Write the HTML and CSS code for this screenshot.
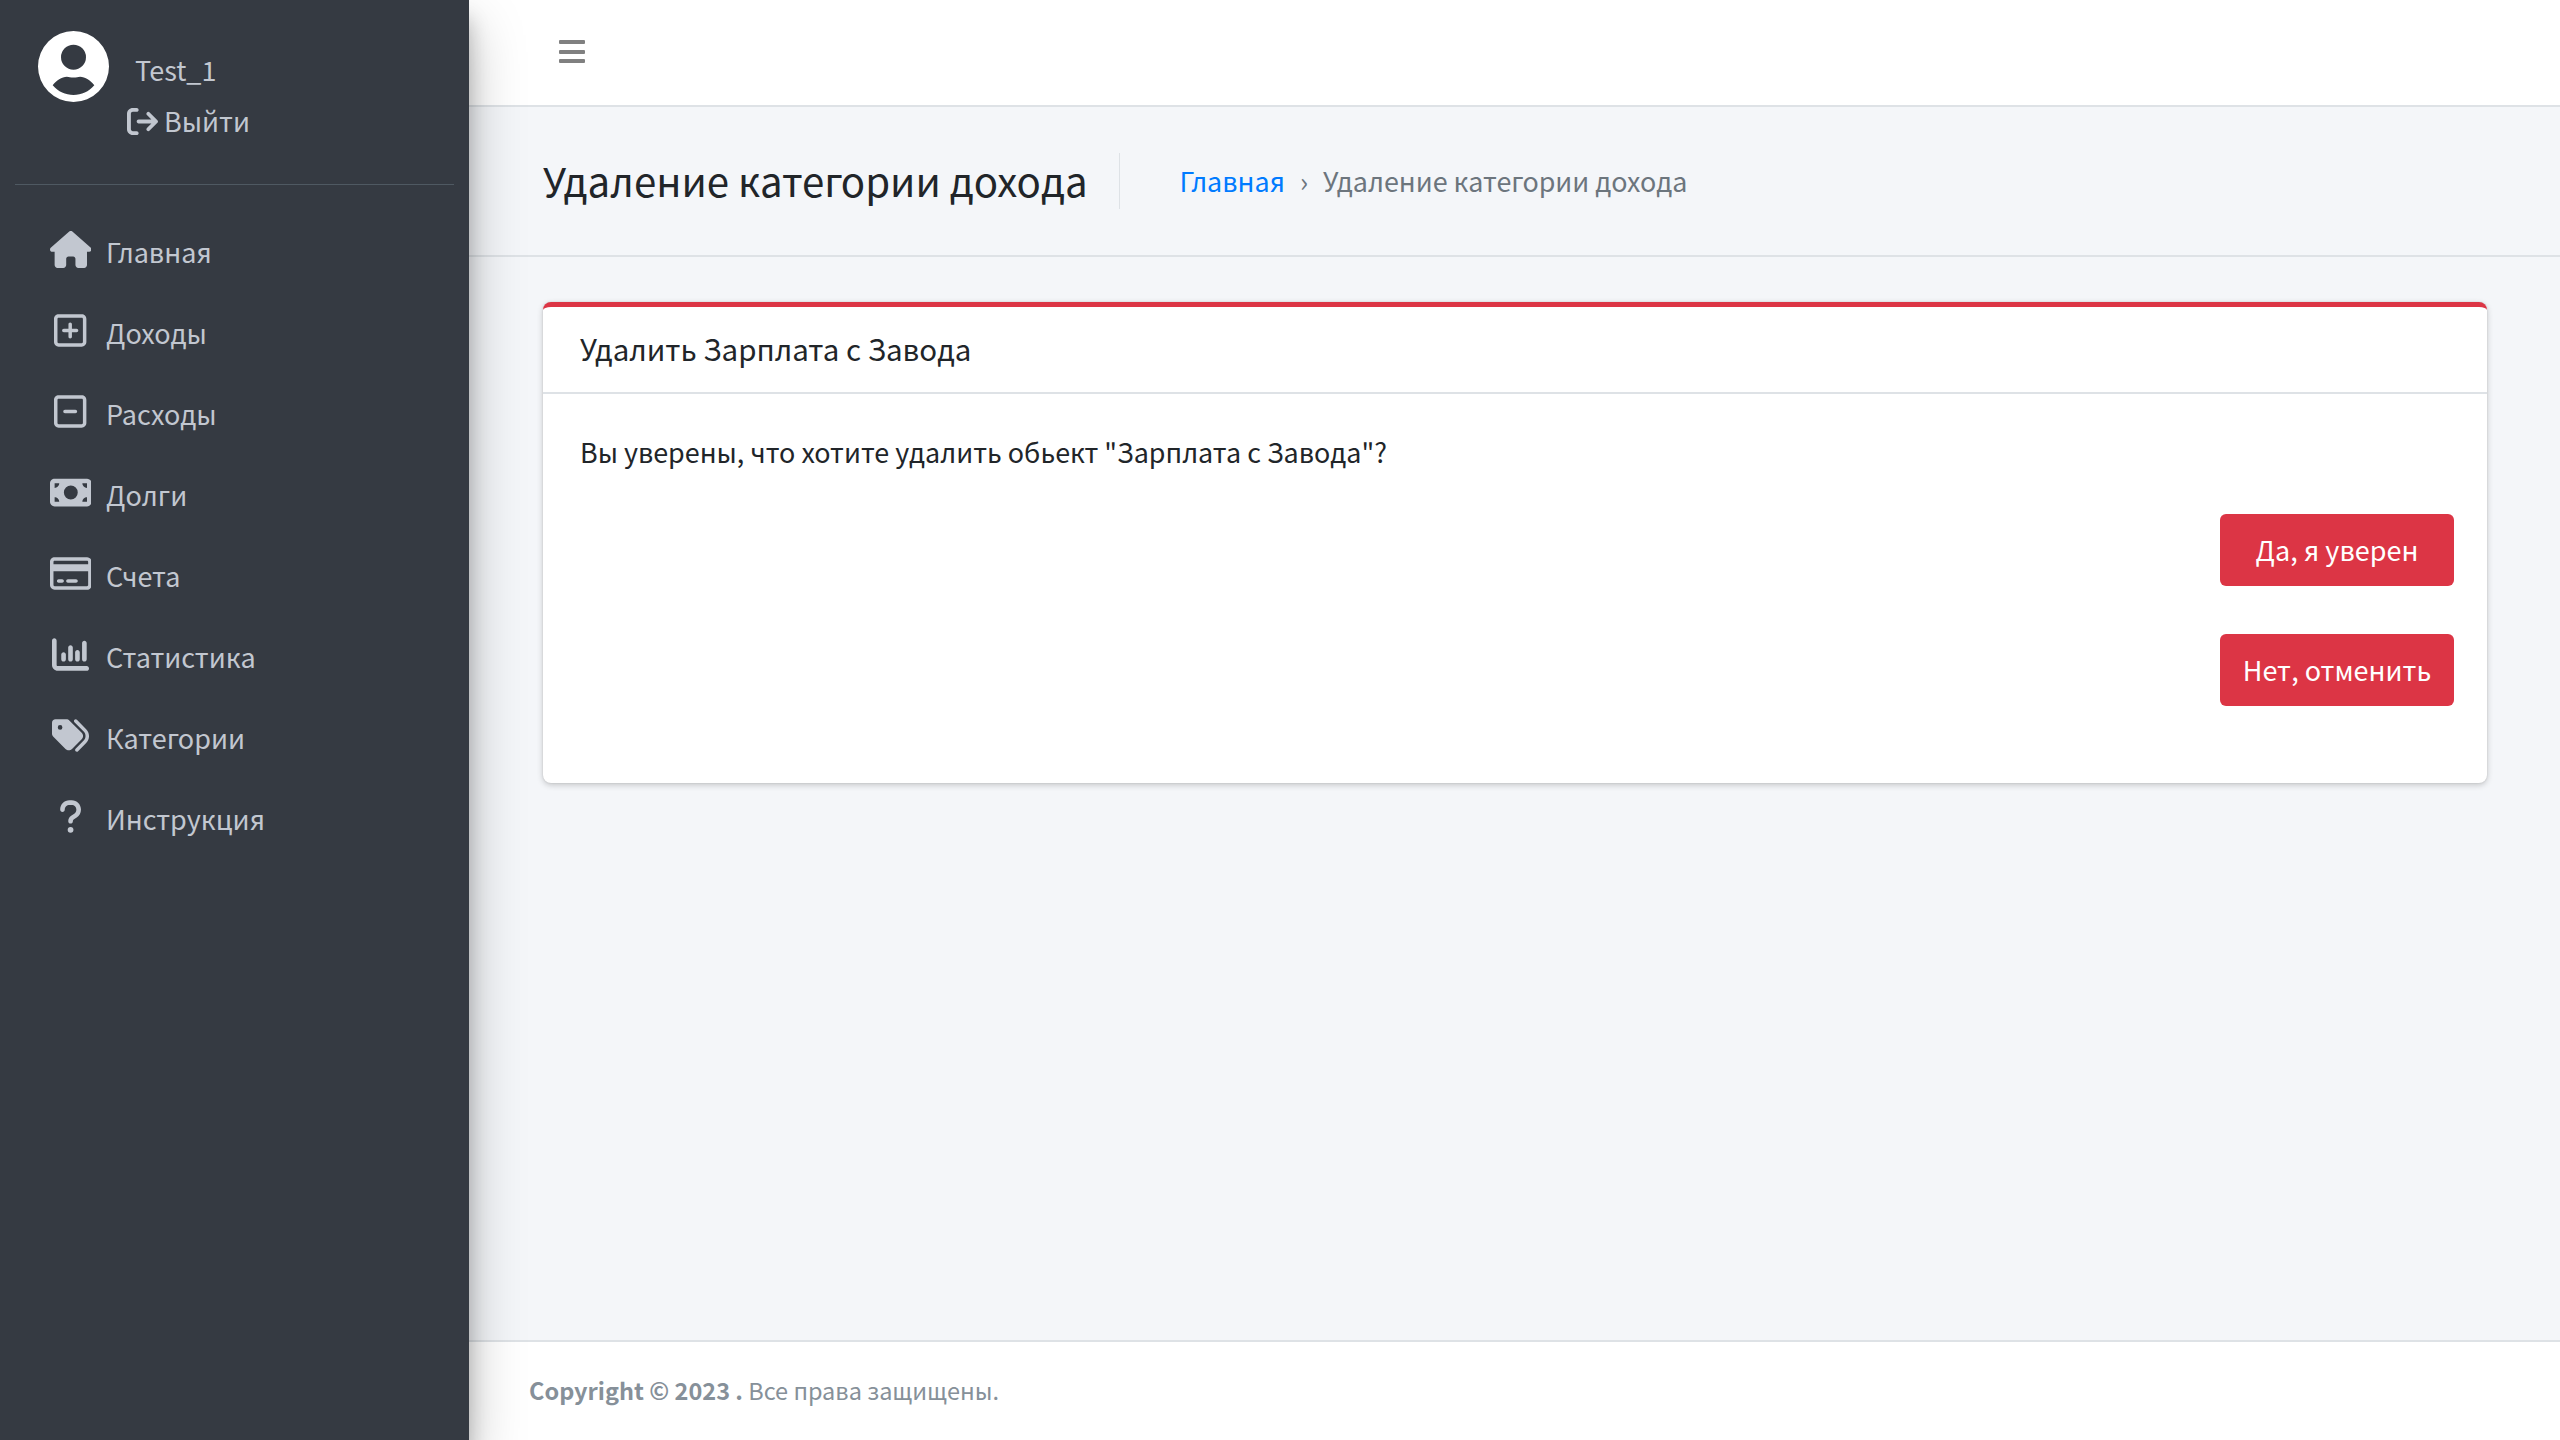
FILE: index.html
```html
<!DOCTYPE html>
<html lang="ru">
<head>
    <meta charset="UTF-8">
    <meta name="viewport" content="width=device-width, initial-scale=1.0">
    <title>Удаление категории дохода</title>
    <link rel="stylesheet" href="styles.css">
</head>
<body>
    <aside class="sidebar">
        <div class="user-panel">
            <svg class="avatar" viewBox="0 0 70 70"><path fill="#fff" fill-rule="evenodd" d="M35 0a35 35 0 1 1 0 70a35 35 0 1 1 0-70zM35 13.500a12.300 12.300 0 1 0 0 24.600a12.300 12.300 0 1 0 0-24.600zM14.500 53.500c5.500 6.500 12.500 9.500 20.500 9.500s15-3 20.500-9.500c-3.500-5-9-8.500-14-8.500c-2 0-3.500 .8-6.500 .8s-4.500-.8-6.500-.8c-5 0-10.500 3.500-14 8.500z"/></svg>
            <div class="user-info">
                <div class="user-name">Test_1</div>
                <a class="user-logout" href="#">
                    <svg class="logout-icon" viewBox="0 0 512 512"><path d="M502.6 278.6c12.5-12.5 12.5-32.8 0-45.3l-128-128c-12.5-12.5-32.8-12.5-45.3 0s-12.5 32.8 0 45.3L402.700 224 192 224c-17.700 0-32 14.300-32 32s14.300 32 32 32l210.700 0-73.400 73.400c-12.500 12.500-12.500 32.800 0 45.300s32.800 12.500 45.300 0l128-128zM160 96c17.700 0 32-14.300 32-32s-14.300-32-32-32L96 32C43 32 0 75 0 128L0 384c0 53 43 96 96 96l64 0c17.700 0 32-14.300 32-32s-14.300-32-32-32l-64 0c-17.700 0-32-14.300-32-32l0-256c0-17.700 14.300-32 32-32l64 0z"/></svg>
                    Выйти
                </a>
            </div>
        </div>

        <!-- Меню -->
        <nav class="menu">
            <a class="menu-item" href="#">
                <span class="menu-icon"><svg viewBox="0 0 576 512"><path d="M575.800 255.500c0 18-15 32.100-32 32.100h-32l.7 160.200c0 2.700-.2 5.400-.5 8.100V472c0 22.100-17.900 40-40 40H456c-1.100 0-2.200 0-3.300-.1c-1.400 .1-2.800 .1-4.200 .1H416 392c-22.100 0-40-17.900-40-40V448 384c0-17.700-14.300-32-32-32H256c-17.700 0-32 14.300-32 32v64 24c0 22.100-17.900 40-40 40H160 128.100c-1.500 0-3-.1-4.500-.2c-1.200 .1-2.400 .2-3.600 .2H104c-22.100 0-40-17.900-40-40V360c0-.9 0-1.900 .1-2.800V287.600H32c-18 0-32-14-32-32.100c0-9 3-17 10-24L266.400 8c7-7 15-8 22-8s15 2 21 7L564.800 231.500c8 7 12 15 11 24z"/></svg></span>
                Главная
            </a>
            <a class="menu-item" href="#">
                <span class="menu-icon"><svg viewBox="0 0 448 512"><path d="M64 80c-8.800 0-16 7.200-16 16V416c0 8.800 7.200 16 16 16H384c8.800 0 16-7.200 16-16V96c0-8.800-7.200-16-16-16H64zM0 96C0 60.700 28.700 32 64 32H384c35.300 0 64 28.700 64 64V416c0 35.300-28.700 64-64 64H64c-35.300 0-64-28.700-64-64V96zM200 344V280H136c-13.300 0-24-10.700-24-24s10.700-24 24-24h64V168c0-13.300 10.700-24 24-24s24 10.700 24 24v64h64c13.300 0 24 10.700 24 24s-10.700 24-24 24H248v64c0 13.300-10.700 24-24 24s-24-10.700-24-24z"/></svg></span>
                Доходы
            </a>
            <a class="menu-item" href="#">
                <span class="menu-icon"><svg viewBox="0 0 448 512"><path d="M64 80c-8.800 0-16 7.200-16 16V416c0 8.800 7.200 16 16 16H384c8.800 0 16-7.200 16-16V96c0-8.800-7.200-16-16-16H64zM0 96C0 60.700 28.700 32 64 32H384c35.300 0 64 28.700 64 64V416c0 35.300-28.700 64-64 64H64c-35.300 0-64-28.700-64-64V96zM152 232H296c13.300 0 24 10.700 24 24s-10.700 24-24 24H152c-13.300 0-24-10.700-24-24s10.700-24 24-24z"/></svg></span>
                Расходы
            </a>
            <a class="menu-item" href="#">
                <span class="menu-icon"><svg viewBox="0 0 576 512"><path d="M64 64C28.700 64 0 92.700 0 128V384c0 35.300 28.700 64 64 64H512c35.300 0 64-28.700 64-64V128c0-35.300-28.700-64-64-64H64zm64 320H64V320c35.300 0 64 28.700 64 64zM64 192V128h64c0 35.300-28.700 64-64 64zM448 384c0-35.300 28.700-64 64-64v64H448zm64-192c-35.300 0-64-28.700-64-64h64v64zM288 160a96 96 0 1 1 0 192 96 96 0 1 1 0-192z"/></svg></span>
                Долги
            </a>
            <a class="menu-item" href="#">
                <span class="menu-icon"><svg viewBox="0 0 576 512"><path d="M512 80c8.800 0 16 7.200 16 16v32H48V96c0-8.800 7.200-16 16-16H512zm16 144V416c0 8.800-7.200 16-16 16H64c-8.800 0-16-7.200-16-16V224H528zM64 32C28.700 32 0 60.700 0 96V416c0 35.300 28.700 64 64 64H512c35.300 0 64-28.700 64-64V96c0-35.300-28.700-64-64-64H64zm56 304c-13.300 0-24 10.700-24 24s10.700 24 24 24h48c13.300 0 24-10.700 24-24s-10.700-24-24-24H120zm128 0c-13.300 0-24 10.700-24 24s10.700 24 24 24H360c13.300 0 24-10.700 24-24s-10.700-24-24-24H248z"/></svg></span>
                Счета
            </a>
            <a class="menu-item" href="#">
                <span class="menu-icon"><svg viewBox="0 0 512 512"><path d="M32 32c17.700 0 32 14.300 32 32V400c0 8.800 7.200 16 16 16H480c17.700 0 32 14.300 32 32s-14.300 32-32 32H80c-44.200 0-80-35.800-80-80V64C0 46.300 14.300 32 32 32zM160 224c17.700 0 32 14.300 32 32v64c0 17.700-14.300 32-32 32s-32-14.300-32-32V256c0-17.700 14.300-32 32-32zm128-64V320c0 17.700-14.300 32-32 32s-32-14.300-32-32V160c0-17.700 14.300-32 32-32s32 14.300 32 32zm64 32c17.700 0 32 14.300 32 32v96c0 17.700-14.300 32-32 32s-32-14.300-32-32V224c0-17.700 14.300-32 32-32zM480 96V320c0 17.700-14.300 32-32 32s-32-14.300-32-32V96c0-17.700 14.300-32 32-32s32 14.300 32 32z"/></svg></span>
                Статистика
            </a>
            <a class="menu-item" href="#">
                <span class="menu-icon"><svg viewBox="0 0 512 512"><path d="M345 39.100L472.800 168.400c52.400 53 52.400 138.200 0 191.200L360.800 472.900c-9.300 9.400-24.500 9.500-33.900 .2s-9.500-24.500-.2-33.900L438.600 325.900c33.900-34.300 33.900-89.400 0-123.700L310.900 72.900c-9.300-9.400-9.200-24.600 .2-33.900s24.600-9.200 33.900 .2zM0 229.500V80C0 53.500 21.500 32 48 32H197.500c17 0 33.300 6.700 45.300 18.700l168 168c25 25 25 65.500 0 90.500L277.300 442.700c-25 25-65.500 25-90.500 0l-168-168C6.700 262.700 0 246.500 0 229.500zM144 144a32 32 0 1 0 -64 0 32 32 0 1 0 64 0z"/></svg></span>
                Категории
            </a>
            <a class="menu-item" href="#">
                <span class="menu-icon"><svg viewBox="0 0 320 512"><path d="M80 160c0-35.300 28.700-64 64-64h32c35.300 0 64 28.700 64 64v3.600c0 21.800-11.100 42.100-29.400 53.800l-42.200 27.100c-25.200 16.200-40.400 44.100-40.400 74V320c0 17.700 14.300 32 32 32s32-14.300 32-32v-1.400c0-8.200 4.200-15.800 11-20.200l42.200-27.100c36.600-23.600 58.800-64.100 58.800-107.700V160c0-70.700-57.300-128-128-128H144C73.300 32 16 89.300 16 160c0 17.700 14.300 32 32 32s32-14.300 32-32zm80 320a40 40 0 1 0 0-80 40 40 0 1 0 0 80z"/></svg></span>
                Инструкция
            </a>
        </nav>
    </aside>

    <div class="wrapper">
        <header class="navbar">
            <a class="menu-toggle" href="#">
                <span></span>
                <span></span>
                <span></span>
            </a>
        </header>

        <section class="content-header">
            <h1>Удаление категории дохода</h1>
            <ol class="breadcrumb">
                <li><a href="#">Главная</a></li>
                <li class="breadcrumb-sep">›</li>
                <li class="breadcrumb-active">Удаление категории дохода</li>
            </ol>
        </section>

        <main class="content">
            <div class="card">
                <div class="card-header">Удалить Зарплата с Завода</div>
                <div class="card-body">
                    <p>Вы уверены, что хотите удалить обьект "Зарплата с Завода"?</p>
                    <div class="actions">
                        <button class="btn">Да, я уверен</button>
                        <button class="btn">Нет, отменить</button>
                    </div>
                </div>
            </div>
        </main>

        <footer class="footer">
            <strong>Copyright © 2023 .</strong>&nbsp;Все права защищены.
        </footer>
    </div>
</body>
</html>
```

FILE: styles.css
```css
* {
    box-sizing: border-box;
}
body {
    font-family: "Noto Sans CJK SC", "Noto Sans", sans-serif;
    font-size: 27px;
    display: flex;
    height: 100vh;
    margin: 0;
    padding: 0;
    overflow: hidden;
    color: #212529;
    background-color: #f4f6f9;
}
a {
    text-decoration: none;
}

/* Боковая панель */
.sidebar {
    width: 469px;
    flex: none;
    z-index: 2;
    background-color: #353a42;
    box-shadow: 0 26px 52px rgba(0, 0, 0, .25), 0 19px 19px rgba(0, 0, 0, .22);
}
.user-panel {
    display: flex;
    align-items: flex-start;
    height: 185px;
    margin: 0 15px;
    padding: 31px 0 0 23px;
    border-bottom: 1.500px solid #4f5962;
}
.avatar {
    width: 71px;
    height: 71px;
    flex: none;
}
.user-info {
    margin-left: 26px;
    color: #c2c7d0;
    line-height: 52px;
}
.user-name {
    margin-top: 13px;
}
.user-logout {
    display: flex;
    align-items: center;
    gap: 6px;
    margin-left: -8px;
    line-height: 50px;
    color: #c2c7d0;
}
.logout-icon {
    width: 31px;
    height: 31px;
    fill: #c2c7d0;
}
.menu {
    display: flex;
    flex-direction: column;
    padding-top: 26px;
}
.menu-item {
    display: flex;
    align-items: center;
    height: 81px;
    padding-left: 47px;
    color: #c2c7d0;
}
.menu-icon {
    display: flex;
    justify-content: center;
    width: 47px;
    margin-right: 12px;
    margin-top: -5px;
}
.menu-icon svg {
    height: 37px;
    fill: #c2c7d0;
}

/* Основная часть */
.wrapper {
    flex: 1;
    display: flex;
    flex-direction: column;
    min-width: 0;
}
.navbar {
    flex: none;
    height: 107px;
    padding: 40px 0 0 90px;
    background-color: #fff;
    border-bottom: 2px solid #dee2e6;
}
.menu-toggle {
    display: flex;
    flex-direction: column;
    justify-content: space-between;
    width: 26px;
    height: 23px;
}
.menu-toggle span {
    height: 4px;
    background-color: #808080;
    border-radius: 1px;
}
.content-header {
    flex: none;
    display: flex;
    align-items: center;
    height: 150px;
    padding-left: 74px;
    border-bottom: 2px solid #dee2e6;
}
.content-header h1 {
    margin: 0;
    padding: 0 31px 2px 0;
    font-size: 40.200px;
    font-weight: 400;
    line-height: 54px;
    border-right: 1.500px solid #dee2e6;
}
.breadcrumb {
    display: flex;
    gap: 15px;
    margin: 0;
    padding: 0 0 1px 60px;
    font-size: 26.900px;
    list-style: none;
}
.breadcrumb a {
    color: #007bff;
}
.breadcrumb-sep,
.breadcrumb-active {
    color: #6c757d;
}
.content {
    flex: 1;
    padding: 45px 73px 0 74px;
}
.card {
    background-color: #fff;
    border-top: 5px solid #dc3545;
    border-radius: 8px;
    box-shadow: 0 0 2px rgba(0, 0, 0, .125), 0 2px 6px rgba(0, 0, 0, .2);
}
.card-header {
    height: 87px;
    padding: 20px 37px;
    font-size: 29.500px;
    border-bottom: 2px solid #dee2e6;
}
.card-body {
    height: 389px;
    padding: 38px 33px 0 37px;
}
.card-body p {
    margin: 0;
    font-size: 26.900px;
}
.actions {
    display: flex;
    flex-direction: column;
    align-items: flex-end;
    gap: 48px;
    margin-top: 43px;
}
.btn {
    width: 234px;
    height: 72px;
    padding: 0 0 2px;
    font-family: inherit;
    font-size: 27px;
    color: #fff;
    background-color: #dc3545;
    border: none;
    border-radius: 6px;
    cursor: pointer;
}
.footer {
    flex: none;
    display: flex;
    align-items: center;
    height: 100px;
    padding: 0 0 2px 60px;
    font-size: 23.500px;
    color: #869099;
    background-color: #fff;
    border-top: 2px solid #dee2e6;
}
```
